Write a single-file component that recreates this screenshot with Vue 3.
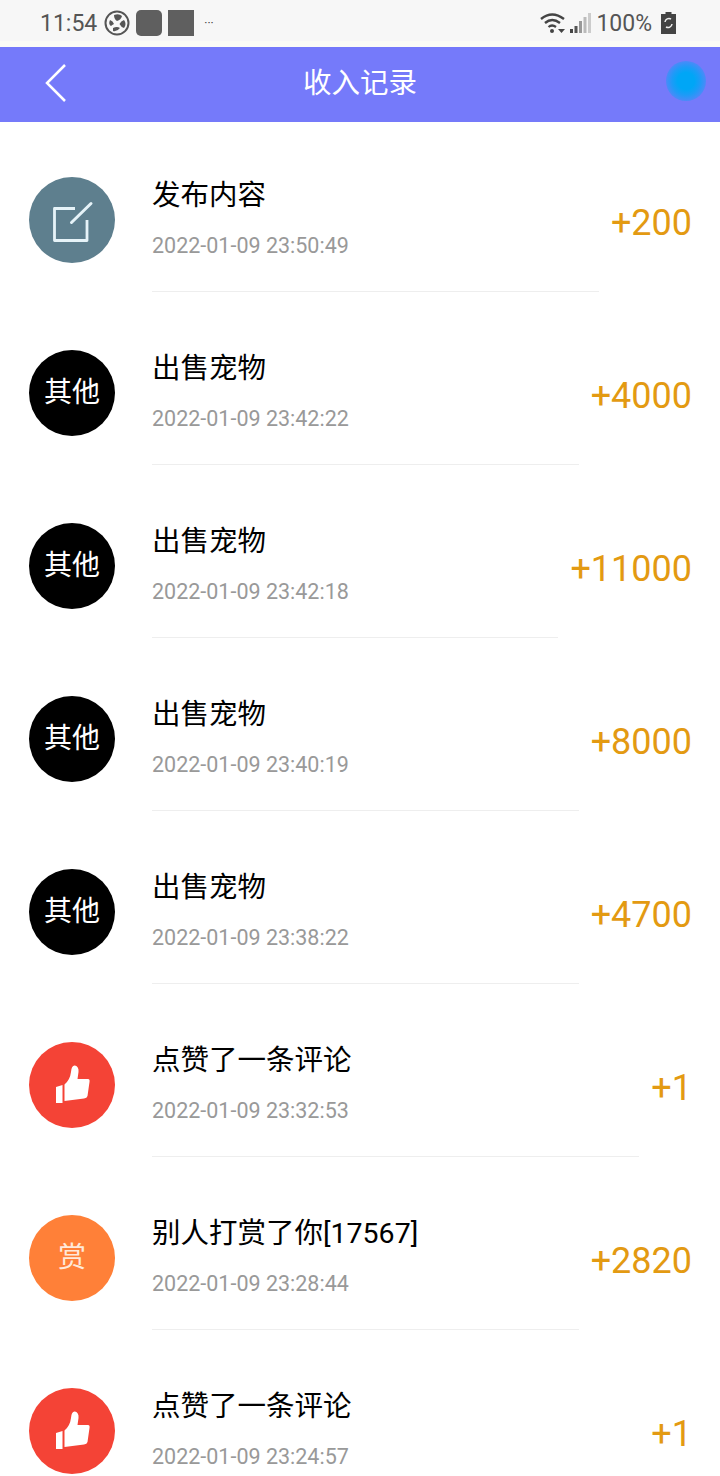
<template>
  <div class="page">
    <div class="status">
      <div class="status-left">
        <span class="time">11:54</span>
        <svg class="fan" width="26" height="26" viewBox="0 0 26 26">
          <circle cx="13" cy="13" r="11.5" fill="none" stroke="#555" stroke-width="2" />
          <path d="M10 5 Q15 3 18 6 Q17 10 13 11 Q10 9 10 5Z" fill="#555" />
          <path d="M20 10 Q23 14 20 18 Q17 17 15.500 14 Q17 11 20 10Z" fill="#555" />
          <path d="M6 10 Q9 11 10 14 Q8 15 7 16 Q4 14 6 10Z" fill="#555" />
          <path d="M9 18 Q13 16 16 18 Q13 22 9 21Z" fill="#555" />
        </svg>
        <span class="app-icon rounded"></span>
        <span class="app-icon"></span>
        <span class="more">···</span>
      </div>
      <div class="status-right">
        <svg width="26" height="22" viewBox="0 0 26 22">
          <path d="M1 7 Q12 -2 24 7" fill="none" stroke="#444" stroke-width="2.4" />
          <path d="M5 11 Q12 5 20 11" fill="none" stroke="#444" stroke-width="2.4" />
          <path d="M8.500 15 Q12 12 16 15" fill="none" stroke="#444" stroke-width="2.2" />
          <circle cx="12" cy="19" r="2" fill="#444" />
          <path d="M18 17 h7 l-3.500 4z" fill="#444" />
        </svg>
        <svg class="signal" width="22" height="22" viewBox="0 0 22 22">
          <rect x="1" y="17" width="3" height="4" fill="#444" />
          <rect x="5.500" y="14" width="3" height="7" fill="#555" />
          <rect x="10" y="9" width="3" height="12" fill="#999" />
          <rect x="14.500" y="5" width="3" height="16" fill="#bbb" />
          <rect x="19" y="1" width="3" height="20" fill="#ccc" />
        </svg>
        <span class="percent">100%</span>
        <svg class="battery" width="15" height="22" viewBox="0 0 15 22">
          <path d="M4.500 0 h6 v2 h4.500 v20 h-15 v-20 h4.500z" fill="#444" />
          <path d="M4 10 a4 4 0 0 1 6 -3 M11 12 a4 4 0 0 1 -6 3" fill="none" stroke="#eee" stroke-width="1.500" />
        </svg>
      </div>
    </div>
    <div class="band"></div>
    <header class="bar">
      <svg class="back" width="24" height="40" viewBox="0 0 24 40">
        <path d="M21 2 L3 20 L21 38" fill="none" stroke="#fff" stroke-width="2.500" />
      </svg>
      <span class="bar-title">收入记录</span>
      <span class="dot"></span>
    </header>
    <div class="list">
      <div v-for="item in records" :key="item.time" class="row">
        <div class="avatar" :class="item.kind">
          <svg v-if="item.kind === 'edit'" width="86" height="86" viewBox="0 0 86 86">
            <path d="M46 31.500 H25.500 V63.500 H58 V43" fill="none" stroke="#e6f3f8" stroke-width="2.800" stroke-linejoin="round" />
            <path d="M62 26.500 L42.500 45.500" fill="none" stroke="#e6f3f8" stroke-width="3" stroke-linecap="round" />
          </svg>
          <svg v-else-if="item.kind === 'like'" width="86" height="86" viewBox="0 0 86 86">
            <path d="M27 45 L33.500 43 V61 H27Z" fill="#fff" />
            <path d="M35.500 42.500 Q41 38 42 30 Q42.500 23 46 23.500 Q50 24.500 49.500 30 L48.500 37 H59 Q61 37 60.500 40 L58.500 54 Q58 56 55 56.500 L35.500 59Z" fill="#fff" />
          </svg>
          <span v-else class="badge">{{ item.badge }}</span>
        </div>
        <div class="body">
          <div class="title">{{ item.title }}</div>
          <div class="date">{{ item.time }}</div>
        </div>
        <div class="amount">{{ item.amount }}</div>
      </div>
    </div>
  </div>
</template>

<script setup>
const records = [
  { kind: 'edit', title: '发布内容', time: '2022-01-09 23:50:49', amount: '+200' },
  { kind: 'other', badge: '其他', title: '出售宠物', time: '2022-01-09 23:42:22', amount: '+4000' },
  { kind: 'other', badge: '其他', title: '出售宠物', time: '2022-01-09 23:42:18', amount: '+11000' },
  { kind: 'other', badge: '其他', title: '出售宠物', time: '2022-01-09 23:40:19', amount: '+8000' },
  { kind: 'other', badge: '其他', title: '出售宠物', time: '2022-01-09 23:38:22', amount: '+4700' },
  { kind: 'like', title: '点赞了一条评论', time: '2022-01-09 23:32:53', amount: '+1' },
  { kind: 'reward', badge: '赏', title: '别人打赏了你[17567]', time: '2022-01-09 23:28:44', amount: '+2820' },
  { kind: 'like', title: '点赞了一条评论', time: '2022-01-09 23:24:57', amount: '+1' }
];
</script>

<style>
html,
body {
  background: #fff;
  overflow: hidden;
}
</style>

<style scoped>
.page {
  width: 720px;
  height: 1476px;
  overflow: hidden;
  background: #fff;
  font-family: Roboto, "Noto Sans CJK SC", sans-serif;
}

.status {
  height: 41px;
  padding: 5px 44px 0 40px;
  display: flex;
  justify-content: space-between;
  align-items: center;
  box-sizing: border-box;
  background: #f7f7f7;
  color: #555;
}

.status-left,
.status-right {
  display: flex;
  align-items: center;
}

.time {
  font-size: 23px;
  margin-right: 7px;
}

.app-icon {
  width: 26px;
  height: 26px;
  margin-left: 6px;
  background: #5f5f5f;
}

.app-icon.rounded {
  border-radius: 5px;
}

.more {
  font-size: 12px;
  margin-left: 10px;
  color: #444;
}

.signal {
  margin-left: 3px;
}

.percent {
  font-size: 23px;
  margin-left: 5px;
}

.battery {
  margin-left: 9px;
}

.band {
  height: 6px;
  background: #fbfcf6;
}

.bar {
  height: 75px;
  padding: 0 16px 8px 44px;
  display: flex;
  justify-content: space-between;
  align-items: center;
  box-sizing: border-box;
  background: #757afa;
  position: relative;
}

.back {
  margin-top: 5px;
}

.bar-title {
  position: absolute;
  left: 0;
  right: 0;
  text-align: center;
  font-size: 28.500px;
  color: #fff;
}

.dot {
  width: 40px;
  height: 40px;
  margin-right: -2px;
  border-radius: 50%;
  background: radial-gradient(circle, #00a6f6 30%, rgba(0, 166, 246, 0.75) 50%, rgba(0, 166, 246, 0) 90%);
}

.list {
  display: flex;
  flex-direction: column;
  gap: 3px;
  height: 1354px;
  overflow: hidden;
}

.row {
  flex: none;
  height: 170px;
  display: flex;
  padding: 0 28px 0 29px;
}

.avatar {
  flex: none;
  width: 86px;
  height: 86px;
  margin-top: 55px;
  border-radius: 50%;
  display: flex;
  align-items: center;
  justify-content: center;
  color: #fff;
  font-size: 28px;
}

.badge {
  margin-bottom: 6px;
}

.avatar.edit {
  background: #5e7f8e;
}

.avatar.other {
  background: #000;
}

.avatar.like {
  background: #f44336;
}

.avatar.reward {
  background: #ff8038;
  color: #ffe9d9;
}

.body {
  flex: 1;
  margin: 0 12px 0 37px;
  padding-top: 53px;
  box-sizing: border-box;
  border-bottom: 1px solid #eee;
}

.title {
  font-size: 28.500px;
  line-height: 42px;
  color: #000;
}

.date {
  margin-top: 14px;
  font-size: 21.500px;
  line-height: 30px;
  color: #999;
}

.amount {
  align-self: flex-start;
  margin-top: 76px;
  font-size: 36px;
  line-height: 50px;
  color: #e39a12;
}
</style>
